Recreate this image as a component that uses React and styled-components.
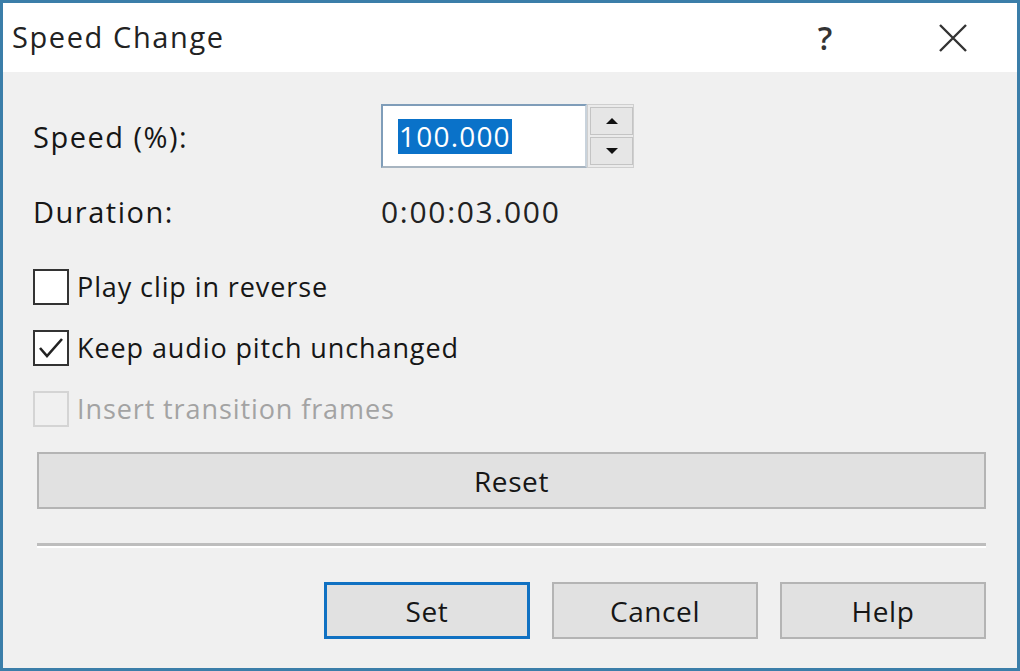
import React from "react";
import styled, { createGlobalStyle } from "styled-components";

const Global = createGlobalStyle`
  html, body { margin: 0; padding: 0; }
  body {
    width: 1020px;
    height: 671px;
    overflow: hidden;
    font-family: "Open Sans", "Noto Sans", sans-serif;
    color: #161616;
  }
`;

const Window = styled.div`
  box-sizing: border-box;
  width: 1020px;
  height: 671px;
  border: 3px solid #3b7ea9;
  display: flex;
  flex-direction: column;
  background: #f0f0f0;
`;

const TitleBar = styled.div`
  height: 69px;
  background: #fff;
  display: flex;
  align-items: center;
  padding-left: 9px;
`;

const Title = styled.div`
  flex: 1;
  font-size: 29px;
  letter-spacing: 1.6px;
  color: #222;
  padding-bottom: 2px;
`;

const TitleButton = styled.div`
  width: ${(p) => p.w}px;
  height: 69px;
  display: flex;
  align-items: center;
  justify-content: center;
  font-size: 32px;
  font-weight: 600;
  color: #333;
`;

const Body = styled.div`
  flex: 1;
  padding: 32px 31px 0 30px;
  display: flex;
  flex-direction: column;
`;

const FieldRow = styled.div`
  display: grid;
  grid-template-columns: 348px 1fr;
  align-items: center;
  height: ${(p) => p.h}px;
  font-size: 29px;
  letter-spacing: 1.5px;
`;

const Spin = styled.div`
  display: flex;
  align-items: stretch;
  height: 64px;
  letter-spacing: 0;
`;

const Input = styled.div`
  box-sizing: border-box;
  width: 206px;
  border: 2px solid #7f9db9;
  border-right-color: #c9d3dc;
  border-bottom-color: #a7b4c0;
  background: #fff;
  display: flex;
  align-items: center;
  padding-left: 15px;
`;

const Selected = styled.span`
  background: #0a72c9;
  color: #fff;
  font-size: 28px;
  letter-spacing: 1.2px;
  line-height: 35px;
  padding: 0 1px;
`;

const Arrows = styled.div`
  width: 47px;
  display: flex;
  flex-direction: column;
  gap: 2px;
  padding: 2px 0 2px 2px;
  box-sizing: border-box;
  background: #ebebeb;
  border: 1px solid #cfcfcf;
`;

const ArrowBtn = styled.div`
  flex: 1;
  background: #e6e6e6;
  border: 1px solid #c4c4c4;
  display: flex;
  align-items: center;
  justify-content: center;
`;

const Duration = styled.div`
  font-size: 30px;
  letter-spacing: 1.7px;
  color: #222;
`;

const CheckRow = styled.label`
  display: flex;
  align-items: center;
  gap: 8px;
  height: 61px;
  font-size: 27px;
  letter-spacing: 0.9px;
  color: ${(p) => (p.disabled ? "#a3a3a3" : "#161616")};
  margin-top: ${(p) => p.mt || 0}px;
`;

const Box = styled.div`
  box-sizing: border-box;
  width: 36px;
  height: 36px;
  border: 2px solid ${(p) => (p.disabled ? "#d4d4d4" : "#333")};
  background: ${(p) => (p.disabled ? "#f0f0f0" : "#fff")};
  display: flex;
  align-items: center;
  justify-content: center;
`;

const Button = styled.div`
  box-sizing: border-box;
  height: ${(p) => p.h || 57}px;
  width: ${(p) => (p.full ? "auto" : "206px")};
  background: #e1e1e1;
  border: ${(p) => (p.primary ? "3px solid #1071c2" : "2px solid #b4b4b4")};
  display: flex;
  align-items: center;
  justify-content: center;
  font-size: 28px;
  letter-spacing: 0.6px;
  color: #161616;
`;

const ResetWrap = styled.div`
  margin: 13px 0 0 4px;
`;

const Separator = styled.div`
  margin: 34px 0 0 4px;
  height: 3px;
  background: #bdbdbd;
  border-bottom: 2px solid #fff;
`;

const Footer = styled.div`
  display: flex;
  justify-content: flex-end;
  gap: 22px;
  margin-top: 34px;
`;

const Check = ({ checked, disabled, children, mt }) => (
  <CheckRow disabled={disabled} mt={mt}>
    <Box disabled={disabled}>
      {checked && (
        <svg width="30" height="30" viewBox="0 0 30 30">
          <path d="M4 15 L11 23 L26 6" fill="none" stroke="#222" strokeWidth="2.6" />
        </svg>
      )}
    </Box>
    {children}
  </CheckRow>
);

const Tri = ({ up }) => (
  <svg width="14" height="8" viewBox="0 0 14 8">
    <path d={up ? "M1 7 L7 1 L13 7 Z" : "M1 1 L7 7 L13 1 Z"} fill="#111" />
  </svg>
);

export default function App() {
  return (
    <>
      <Global />
      <Window>
        <TitleBar>
          <Title>Speed Change</Title>
          <TitleButton w={128}>?</TitleButton>
          <TitleButton w={128}>
            <svg width="30" height="30" viewBox="0 0 30 30">
              <path d="M2 2 L28 28 M28 2 L2 28" stroke="#333" strokeWidth="2.4" />
            </svg>
          </TitleButton>
        </TitleBar>
        <Body>
          <FieldRow h={64}>
            <span>Speed (%):</span>
            <Spin>
              <Input>
                <Selected>100.000</Selected>
              </Input>
              <Arrows>
                <ArrowBtn>
                  <Tri up />
                </ArrowBtn>
                <ArrowBtn>
                  <Tri />
                </ArrowBtn>
              </Arrows>
            </Spin>
          </FieldRow>
          <FieldRow h={86}>
            <span>Duration:</span>
            <Duration>0:00:03.000</Duration>
          </FieldRow>
          <Check mt={2}>Play clip in reverse</Check>
          <Check checked>Keep audio pitch unchanged</Check>
          <Check disabled>Insert transition frames</Check>
          <ResetWrap>
            <Button full>Reset</Button>
          </ResetWrap>
          <Separator />
          <Footer>
            <Button primary>Set</Button>
            <Button>Cancel</Button>
            <Button>Help</Button>
          </Footer>
        </Body>
      </Window>
    </>
  );
}
